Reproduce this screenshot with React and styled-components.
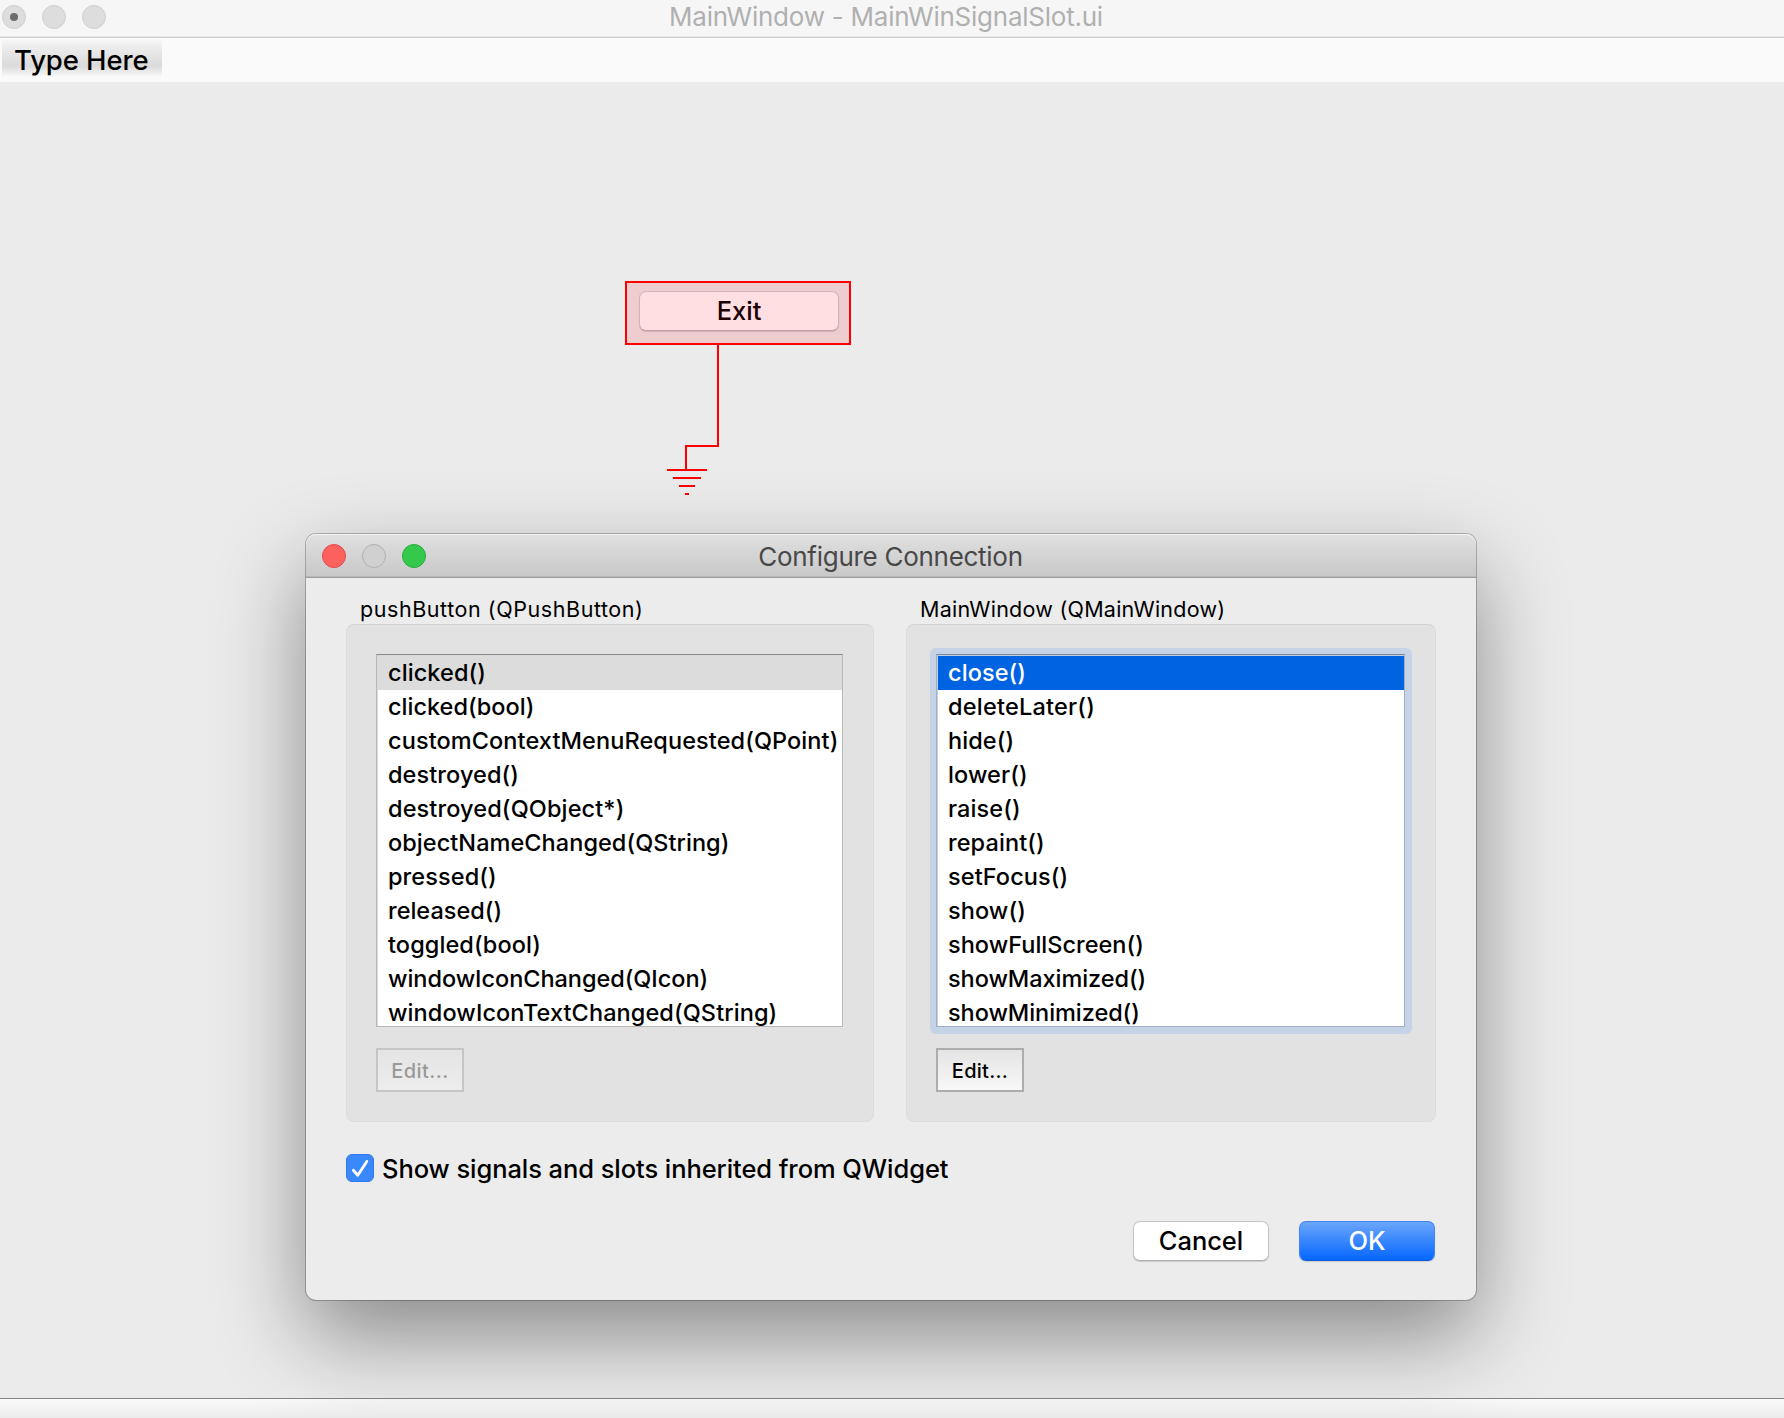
import React from "react";
import styled, { createGlobalStyle, css } from "styled-components";

const GlobalStyle = createGlobalStyle`
  * { box-sizing: border-box; }
  body {
    margin: 0;
    overflow: hidden;
    background: #ebebeb;
    color: #000;
    font-family: Inter, "Liberation Sans", sans-serif;
    -webkit-font-smoothing: antialiased;
  }
  button { font-family: inherit; margin: 0; padding: 0; }
`;

const MainWindow = styled.div`
  position: relative;
  display: flex;
  flex-direction: column;
  width: 1784px;
  height: 1418px;
  overflow: hidden;
  background: #ebebeb;
`;

/* Main window chrome */

const MainTitleBar = styled.header`
  display: grid;
  grid-template-columns: 1fr auto 1fr;
  height: 38px;
  padding: 0 14px 4px 2px;
  align-items: center;
  background: #f6f6f6;
  border-bottom: 1px solid #cfcfcf;
  box-shadow: inset 0 -1px 0 #e6e6e6;
`;

const MainTitle = styled.h1`
  margin: 0;
  padding: 1px 0 0;
  font-size: 26px;
  font-weight: 400;
  line-height: 32px;
  letter-spacing: -0.24px;
  color: #b0b0b0;
  white-space: nowrap;
`;

const Lights = styled.div`
  display: flex;
  gap: 16px;
`;

const Light = styled.span`
  display: flex;
  align-items: center;
  justify-content: center;
  width: 24px;
  height: 24px;
  border-radius: 50%;
  background: ${(p) => p.$fill};
  border: 1px solid ${(p) => p.$edge};
`;

const UnsavedDot = styled.span`
  width: 8px;
  height: 8px;
  border-radius: 50%;
  background: #6c6c6c;
`;

const MenuBar = styled.nav`
  display: flex;
  align-items: flex-start;
  height: 44px;
  padding-left: 2px;
  background: #fafafa;
`;

const MenuPlaceholder = styled.div`
  width: 160px;
  height: 39px;
  padding: 5px 0 0 12px;
  font-size: 27.5px;
  font-weight: 450;
  line-height: 34px;
  letter-spacing: -0.1px;
  white-space: nowrap;
  background: linear-gradient(#fafafa 0%, #ececec 25%, #dadada 72%, #fafafa 100%);
`;

const FormCanvas = styled.main`
  position: relative;
  flex: 1;
`;

const StatusBar = styled.footer`
  height: 20px;
  border-top: 1px solid #858585;
  background: linear-gradient(#fafafa, #ececec);
`;

/* Signal/slot drawing on the form */

const SelectedWidget = styled.div`
  position: absolute;
  left: 625px;
  top: 199px;
  width: 226px;
  height: 64px;
  padding: 8px 10px 10px 12px;
  border: 2px solid #ff0000;
  background: #eecdcf;
`;

const ExitButton = styled.button`
  display: block;
  width: 100%;
  height: 40px;
  border: 1px solid #d5b3b5;
  border-bottom-color: #bfa0a2;
  border-radius: 7px;
  background: #ffdfe1;
  font-size: 25.5px;
  font-weight: 450;
  line-height: 38px;
  color: #200004;
  box-shadow: 0 1px 1px rgba(120, 60, 60, 0.2);
`;

const Wire = styled.svg`
  position: absolute;
  left: 667px;
  top: 263px;
`;

/* Dialog */

const Dialog = styled.section`
  position: absolute;
  left: 306px;
  top: 534px;
  display: flex;
  flex-direction: column;
  width: 1170px;
  height: 766px;
  border-radius: 10px;
  background: #ececec;
  box-shadow: 0 0 0 1px rgba(0, 0, 0, 0.24), 0 36px 88px rgba(0, 0, 0, 0.42);
`;

const DialogHeader = styled.header`
  display: grid;
  grid-template-columns: 1fr auto 1fr;
  align-items: center;
  height: 44px;
  padding: 0 17px 0 16px;
  border-radius: 10px 10px 0 0;
  border-bottom: 1px solid #9c9c9c;
  background: linear-gradient(#e0e0e0, #c8c8c8);
  box-shadow: inset 0 1px 0 #f4f4f4, inset 0 -1px 0 #b8b8b8;
`;

const DialogTitle = styled.h2`
  margin: 0;
  padding: 2px 0 0;
  font-size: 26px;
  font-weight: 400;
  line-height: 40px;
  letter-spacing: -0.28px;
  color: #484848;
  white-space: nowrap;
`;

const DialogBody = styled.div`
  display: flex;
  flex-direction: column;
  padding: 17px 40px 0;
`;

const Columns = styled.div`
  display: grid;
  grid-template-columns: 528px 530px;
  column-gap: 32px;
`;

const GroupTitle = styled.div`
  height: 29px;
  padding-left: 14px;
  font-size: 21.5px;
  font-weight: 400;
  line-height: 28px;
  letter-spacing: ${(p) => p.$tracking};
  white-space: nowrap;
`;

const GroupFrame = styled.div`
  height: 498px;
  padding: 29px 30px 0 29px;
  border: 1px solid #dcdcdc;
  border-top-color: #d3d3d3;
  border-radius: 8px;
  background: #e2e2e2;
`;

const focusRing = css`
  margin: -6px -7px -7px -6px;
  padding: 6px 7px 7px 6px;
  border-radius: 6px;
  background: #c6d3e6;
`;

const ListFrame = styled.div`
  ${(p) => p.$focused && focusRing}
`;

const List = styled.ul`
  height: 373px;
  margin: 0;
  padding: 1px 0 0 1px;
  overflow: hidden;
  list-style: none;
  border: 1px solid ${(p) => (p.$focused ? "#9fb0c8" : "#b8b8b8")};
  border-top-color: ${(p) => (p.$focused ? "#77869b" : "#8a8a8a")};
  background: #fff;
  box-shadow: inset 1px 1px 0 ${(p) => (p.$focused ? "#c3cfdf" : "#dadada")};
`;

const Item = styled.li`
  height: 34px;
  padding-left: 10px;
  font-size: 23.5px;
  font-weight: 500;
  line-height: 34px;
  letter-spacing: ${(p) => p.$tracking || "0.09px"};
  white-space: nowrap;
  color: ${(p) => (p.$tone === "active" ? "#fff" : "#000")};
  background: ${(p) =>
    p.$tone === "active" ? "#0063e1" : p.$tone === "inactive" ? "#dcdcdc" : "transparent"};
`;

const EditButton = styled.button`
  display: block;
  width: 88px;
  height: 44px;
  margin-top: 21px;
  padding-top: 2px;
  border: 2px solid #adadad;
  background: linear-gradient(#e4e4e4, #f8f8f8);
  font-size: 20px;
  font-weight: 500;
  line-height: 36px;
  letter-spacing: 0.26px;
  color: #000;

  &:disabled {
    border-color: #c6c6c6;
    background: linear-gradient(#e4e4e4, #ededed);
    font-weight: 450;
    letter-spacing: 0.4px;
    color: #999;
  }
`;

const CheckRow = styled.label`
  display: flex;
  align-items: center;
  gap: 8px;
  height: 28px;
  margin-top: 32px;
`;

const CheckBox = styled.span`
  display: flex;
  width: 28px;
  height: 28px;
  border: 1px solid #2f7bf0;
  border-radius: 6px;
  background: #3b88fd;
`;

const CheckLabel = styled.span`
  padding-top: 2px;
  font-size: 25.5px;
  font-weight: 450;
  line-height: 28px;
  letter-spacing: -0.07px;
  white-space: nowrap;
`;

const Actions = styled.div`
  display: flex;
  justify-content: flex-end;
  gap: 30px;
  margin: 39px 1px 0 0;
`;

const ActionButton = styled.button`
  width: 136px;
  height: 40px;
  border: 1px solid ${(p) => (p.$primary ? "#3f86f5" : "#c4c4c4")};
  border-bottom-color: ${(p) => (p.$primary ? "#0a5fe6" : "#aeaeae")};
  border-radius: 7px;
  background: ${(p) => (p.$primary ? "linear-gradient(#6ba6fb, #0566ff)" : "#fff")};
  box-shadow: 0 1px 1px rgba(0, 0, 0, 0.14);
  font-size: 25.5px;
  font-weight: 450;
  line-height: 36px;
  letter-spacing: -0.06px;
  color: ${(p) => (p.$primary ? "#fff" : "#000")};
`;

const signals = [
  ["clicked()"],
  ["clicked(bool)", "0px"],
  ["customContextMenuRequested(QPoint)"],
  ["destroyed()"],
  ["destroyed(QObject*)", "0.12px"],
  ["objectNameChanged(QString)", "0.05px"],
  ["pressed()"],
  ["released()", "0px"],
  ["toggled(bool)"],
  ["windowIconChanged(QIcon)", "-0.04px"],
  ["windowIconTextChanged(QString)"],
];

const slots = [
  ["close()"],
  ["deleteLater()", "0.22px"],
  ["hide()"],
  ["lower()"],
  ["raise()"],
  ["repaint()"],
  ["setFocus()"],
  ["show()"],
  ["showFullScreen()", "0.02px"],
  ["showMaximized()", "-0.06px"],
  ["showMinimized()", "-0.06px"],
];

function MethodGroup({ title, tracking, items, focused, editable }) {
  return (
    <div>
      <GroupTitle $tracking={tracking}>{title}</GroupTitle>
      <GroupFrame>
        <ListFrame $focused={focused}>
          <List $focused={focused}>
            {items.map(([name, spacing], i) => (
              <Item
                key={name}
                $tracking={spacing}
                $tone={i === 0 ? (focused ? "active" : "inactive") : undefined}
              >
                {name}
              </Item>
            ))}
          </List>
        </ListFrame>
        <EditButton disabled={!editable}>Edit...</EditButton>
      </GroupFrame>
    </div>
  );
}

export default function App() {
  return (
    <MainWindow>
      <GlobalStyle />
      <MainTitleBar>
        <Lights>
          <Light $fill="#dddddd" $edge="#cfcfcf">
            <UnsavedDot />
          </Light>
          <Light $fill="#dddddd" $edge="#cfcfcf" />
          <Light $fill="#dddddd" $edge="#cfcfcf" />
        </Lights>
        <MainTitle>MainWindow - MainWinSignalSlot.ui</MainTitle>
      </MainTitleBar>
      <MenuBar>
        <MenuPlaceholder>Type Here</MenuPlaceholder>
      </MenuBar>
      <FormCanvas>
        <SelectedWidget>
          <ExitButton>Exit</ExitButton>
        </SelectedWidget>
        <Wire width="54" height="152" viewBox="0 0 54 152" fill="none" stroke="#ff0000" strokeWidth="2" shapeRendering="crispEdges">
          <path d="M51 0V101H19V124" />
          <path d="M0 125H40M6 133H34M12 141H28M18 149H22" />
        </Wire>
      </FormCanvas>
      <StatusBar />

      <Dialog>
        <DialogHeader>
          <Lights>
            <Light $fill="#fd615d" $edge="#e04b47" />
            <Light $fill="#d0d0d0" $edge="#b0b0b0" />
            <Light $fill="#34c94b" $edge="#27ab39" />
          </Lights>
          <DialogTitle>Configure Connection</DialogTitle>
        </DialogHeader>
        <DialogBody>
          <Columns>
            <MethodGroup title="pushButton (QPushButton)" tracking="0.56px" items={signals} />
            <MethodGroup title="MainWindow (QMainWindow)" tracking="0.245px" items={slots} focused editable />
          </Columns>
          <CheckRow>
            <CheckBox>
              <svg width="26" height="26" viewBox="0 0 26 26" fill="none">
                <path d="M6.3 15.2L10.8 20.2L19.8 6.5" stroke="#fff" strokeWidth="2.8" strokeLinecap="round" strokeLinejoin="round" />
              </svg>
            </CheckBox>
            <CheckLabel>Show signals and slots inherited from QWidget</CheckLabel>
          </CheckRow>
          <Actions>
            <ActionButton>Cancel</ActionButton>
            <ActionButton $primary>OK</ActionButton>
          </Actions>
        </DialogBody>
      </Dialog>
    </MainWindow>
  );
}
